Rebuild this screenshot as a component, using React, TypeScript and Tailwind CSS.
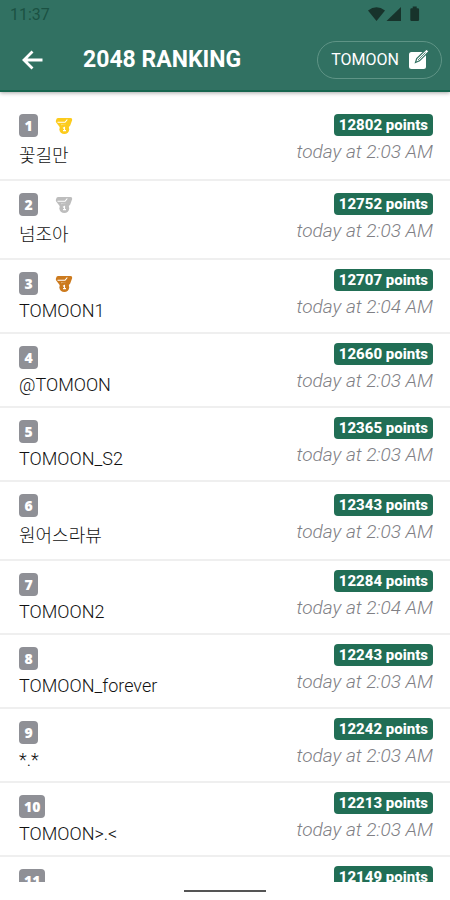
import { useState } from 'react';
import clsx from 'clsx';

type Entry = {
  rank: number;
  name: string;
  points: number;
  date: string;
};

const entries: Entry[] = [
  { rank: 1, name: '꽃길만', points: 12802, date: 'today at 2:03 AM' },
  { rank: 2, name: '넘조아', points: 12752, date: 'today at 2:03 AM' },
  { rank: 3, name: 'TOMOON1', points: 12707, date: 'today at 2:04 AM' },
  { rank: 4, name: '@TOMOON', points: 12660, date: 'today at 2:03 AM' },
  { rank: 5, name: 'TOMOON_S2', points: 12365, date: 'today at 2:03 AM' },
  { rank: 6, name: '원어스라뷰', points: 12343, date: 'today at 2:03 AM' },
  { rank: 7, name: 'TOMOON2', points: 12284, date: 'today at 2:04 AM' },
  { rank: 8, name: 'TOMOON_forever', points: 12243, date: 'today at 2:03 AM' },
  { rank: 9, name: '*.*', points: 12242, date: 'today at 2:03 AM' },
  { rank: 10, name: 'TOMOON>.<', points: 12213, date: 'today at 2:03 AM' },
  { rank: 11, name: '', points: 12149, date: '' },
];

const medalColors: Record<number, string> = {
  1: 'text-[#fccb1c]',
  2: 'text-[#bdbdbd]',
  3: 'text-[#cc7a1e]',
};

const isHangul = (text: string) => /[\uac00-\ud7a3]/.test(text);

const Medal = ({ className }: { className: string }) => (
  <svg viewBox="0 0 18 18" className={clsx('size-[18px]', className)} aria-hidden="true">
    {/* ribbon */}
    <path fill="currentColor" d="M3 1h12.500q2 0 1.700 2l-2 5.500-1.700 2H5L1.200 5.500Q.5 4.500 1 3.200 1.500 1 3 1z" />
    <path fill="none" stroke="white" strokeWidth="1.100" d="M2.500 5.300h7.500l2.300-2.800M6.300 8h4.200" />
    {/* disc */}
    <circle cx="9.300" cy="12.200" r="4.900" fill="currentColor" />
    <path fill="none" stroke="white" strokeWidth="1.100" d="M8 11.200l1.500-.8v2.600M8 13.600h3" />
  </svg>
);

const StatusBar = () => (
  <div className="flex h-7 items-center justify-between pl-[10px] pr-[30px] text-[#17332b]">
    <span className="pt-0.5 text-base text-[#1b5142]">11:37</span>
    <svg viewBox="0 0 52 16" className="h-4 w-[52px]" fill="currentColor" aria-hidden="true">
      <path d="M0 4.500Q8.500-2 17 4.500L8.500 15z" />
      <path d="M33 1v14H18.500z" />
      <path d="M43.500 2.200h1.200V.6h4v1.600h1.200q1.200 0 1.200 1.200v10.400q0 1.200-1.200 1.200h-6.400q-1.200 0-1.200-1.200V3.400q0-1.200 1.200-1.200z" />
    </svg>
  </div>
);

const RankingRow = ({ entry }: { entry: Entry }) => (
  <li className="flex min-h-[74px] items-center justify-between border-b-2 border-[#efefef] pl-[19px] pr-[17px]">
    <div className="flex flex-col items-start pb-2 pt-3">
      <div className="flex items-center gap-[17px]">
        <span className="min-w-[19px] rounded bg-[#8f9096] px-[5px] text-center font-['Open_Sans'] text-sm font-extrabold leading-[23px] text-white">
          {entry.rank}
        </span>
        {medalColors[entry.rank] && <Medal className={medalColors[entry.rank]} />}
      </div>
      <span
        className={clsx(
          'mt-[3px] min-h-[26px] text-lg text-[#111]',
          isHangul(entry.name) ? 'font-light leading-[31px]' : 'font-[350] leading-[26px]'
        )}
      >
        {entry.name}
      </span>
    </div>
    <div className="flex flex-col items-end">
      <span className="rounded bg-[#216e55] px-[5px] text-[15px] font-extrabold leading-[22px] text-white">
        {entry.points} points
      </span>
      <time className="min-h-8 text-[19px] font-light italic leading-8 text-[#808085]">{entry.date}</time>
    </div>
  </li>
);

export default function App() {
  const [nickname] = useState('TOMOON');

  return (
    <div className="flex h-screen flex-col overflow-hidden bg-white font-['Roboto','Noto_Sans_CJK_KR',sans-serif]">
      <header className="z-10 shrink-0 bg-[#317162] shadow-[inset_0_-2px_0_#17664f,0_1px_4px_rgba(0,0,0,0.35)]">
        <StatusBar />
        <div className="flex h-16 items-center pl-5 pr-2 text-white">
          <button type="button" aria-label="Back" className="mr-[38px]">
            <svg viewBox="0 0 25 24" className="h-6 w-[25px]" fill="none" stroke="currentColor" strokeWidth="2.800" aria-hidden="true">
              <path d="M12.500 3.500L4 12l8.500 8.500M4 12h18.500" />
            </svg>
          </button>
          <h1 className="flex-1 text-[23px] font-bold">2048 RANKING</h1>
          <button
            type="button"
            className="flex h-[38px] items-center gap-[9px] rounded-full border border-[#5f9486] pl-[13px] pr-[11px] text-base"
          >
            {nickname}
            <svg viewBox="0 0 22 22" className="size-[22px]" aria-hidden="true">
              <rect x="1" y="3" width="17" height="17" rx="2.500" fill="currentColor" />
              <path d="M7.500 13.500l1.200-4L18.500 0l2.500 2.300-9.500 9.500z" fill="white" stroke="#317162" strokeWidth="1.200" />
              <path d="M10 11l7.500-7.500" stroke="#317162" strokeWidth="0.800" />
            </svg>
          </button>
        </div>
      </header>
      <main className="min-h-0 flex-1 overflow-hidden pt-[10px]">
        <ol>
          {entries.map((entry) => (
            <RankingRow key={entry.rank} entry={entry} />
          ))}
        </ol>
      </main>
      <footer className="flex h-[18px] shrink-0 items-center justify-center">
        <div className="h-[2px] w-[82px] bg-[#555]" />
      </footer>
    </div>
  );
}
